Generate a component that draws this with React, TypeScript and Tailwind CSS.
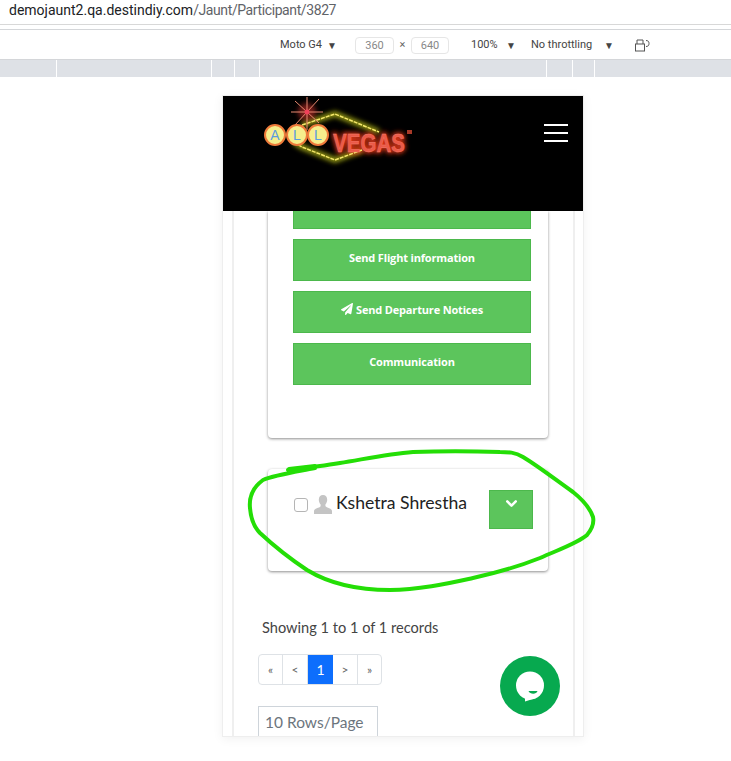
import { ChevronDown } from 'lucide-react';
import { FaPaperPlane } from 'react-icons/fa';

const rulerStops = [57, 155, 23, 25, 287, 26, 22];

const actions = [
  { label: 'Send Flight information', icon: false },
  { label: 'Send Departure Notices', icon: true },
  { label: 'Communication', icon: false },
];

const Logo = () => (
  <svg width="180" height="74" viewBox="0 0 180 74" className="block">
    <defs>
      <filter id="glow" x="-30%" y="-30%" width="160%" height="160%">
        <feGaussianBlur stdDeviation="2.5" />
      </filter>
    </defs>
    {/* glow layer */}
    <path d="M52 29 L85 18 L129 36 M44 46 L52 51 L85 64 L112 54" fill="none" stroke="#a8ac18" strokeWidth="5" filter="url(#glow)" />
    <text x="83" y="56" fontSize="25" fontWeight="700" fontFamily="Liberation Sans, sans-serif" fill="#d83418" stroke="#d83418" strokeWidth="3" textLength="72" lengthAdjust="spacingAndGlyphs" filter="url(#glow)">
      VEGAS
    </text>
    <circle cx="57" cy="16" r="9" fill="#c9302c" opacity="0.6" filter="url(#glow)" />
    {/* diamond */}
    <path d="M52 29 L85 18 L129 36 M44 46 L52 51 L85 64 L112 54" fill="none" stroke="#f4e66a" strokeWidth="1.5" strokeDasharray="4 1" />
    {/* star */}
    <g stroke="#e98a72" strokeWidth="1">
      <path d="M57 1 V34" />
      <path d="M41 16 H73" />
      <path d="M45 5 L69 27" />
      <path d="M69 3 L45 29" />
    </g>
    <circle cx="57" cy="16" r="2.5" fill="#f0405a" />
    {/* bulbs */}
    {[
      [25, 'A'],
      [47, 'L'],
      [68, 'L'],
    ].map(([cx, letter]) => (
      <g key={cx as number}>
        <circle cx={cx as number} cy="39" r="10" fill="#f6ee8c" stroke="#ee7a3a" strokeWidth="2" />
        <text x={cx as number} y="44" textAnchor="middle" fontSize="14" fontFamily="Liberation Sans, sans-serif" fill="#5a9be0">
          {letter}
        </text>
      </g>
    ))}
    <text x="83" y="56" fontSize="25" fontWeight="700" fontFamily="Liberation Sans, sans-serif" fill="#ec5a48" stroke="#f08070" strokeWidth="0.4" textLength="72" lengthAdjust="spacingAndGlyphs">
      VEGAS
    </text>
    <rect x="157" y="34" width="5" height="4" fill="#a83a28" />
  </svg>
);

const App = () => {
  return (
    <div className="relative w-[731px] h-[761px] overflow-hidden bg-white font-['Lato',sans-serif]">
      {/* browser url bar */}
      <div className="h-[25px] pl-[9px] pt-px border-b border-[#d8d8d8] text-[14px] leading-[18px] font-['Roboto',sans-serif] text-[#5f6368]">
        <span className="text-[#202124]">demojaunt2.qa.destindiy.com</span>
        <span className="tracking-[-0.4px]">/Jaunt/Participant/3827</span>
      </div>

      {/* devtools device toolbar */}
      <div className="mt-[4px] h-[31px] pt-[1px] border-y border-[#d4d6d9] flex items-center text-[11px] text-[#444] font-['Roboto',sans-serif]">
        <span className="ml-[280px] w-[47px]">Moto G4</span>
        <span className="text-[10px] w-[28px]">▼</span>
        <span className="w-[39px] h-[17px] border border-[#e6e6e6] rounded-sm text-center leading-[15px] text-[#888]">360</span>
        <span className="w-[17px] text-center text-[#666]">×</span>
        <span className="w-[38px] h-[17px] border border-[#e6e6e6] rounded-sm text-center leading-[15px] text-[#888]">640</span>
        <span className="ml-[22px] w-[35px]">100%</span>
        <span className="text-[10px] w-[25px]">▼</span>
        <span className="w-[73px]">No throttling</span>
        <span className="text-[10px] w-[30px]">▼</span>
        <svg width="16" height="14" viewBox="0 0 16 14" fill="none" stroke="#555" strokeWidth="1">
          <rect x="1.5" y="6" width="9" height="7" />
          <path d="M3 6V2h6v4M12 2.5c2 0 3 1 3 3s-1 3-3 3" />
        </svg>
      </div>

      {/* ruler */}
      <div className="h-[17px] bg-[#dee1e6] flex">
        {rulerStops.map((w, i) => (
          <div key={i} className="border-r border-white" style={{ width: w }} />
        ))}
      </div>

      {/* phone viewport */}
      <div className="mt-[18px] ml-[222px] w-[362px] h-[642px] border border-[#eeeeee] shadow-[0_2px_10px_rgba(0,0,0,0.06)] overflow-hidden">
        <div className="h-[115px] bg-black flex items-start justify-between">
          <div className="ml-[27px]">
            <Logo />
          </div>
          <div className="mt-[28px] mr-[15px] w-[24px] flex flex-col gap-[6px]">
            <div className="h-[2px] bg-white" />
            <div className="h-[2px] bg-white" />
            <div className="h-[2px] bg-white" />
          </div>
        </div>

        <div className="ml-[9px] mr-[8px] h-[527px] border-x-2 border-[#efefef] pl-[34px] pr-[25px]">
          {/* actions card */}
          <div className="h-[227px] bg-white rounded-b shadow-[0_1px_3px_rgba(0,0,0,0.45)] px-[25px] pr-[17px]">
            <div className="h-[18px] bg-[#5cc55c] border-x border-b border-[#4cb84c]" />
            {actions.map((a) => (
              <div
                key={a.label}
                className="mt-[10px] h-[42px] bg-[#5cc55c] border border-[#4cb84c] flex items-start justify-center pt-[10px] gap-[3px] text-white text-[11px] leading-[15px] tracking-[-0.17px] font-bold font-['Open_Sans',sans-serif]"
              >
                {a.icon && <FaPaperPlane className="w-[12px] h-[12px] mt-[1px]" />}
                {a.label}
              </div>
            ))}
          </div>

          {/* participant card */}
          <div className="mt-[31px] h-[102px] bg-white rounded shadow-[0_1px_3px_rgba(0,0,0,0.45)] flex items-start pl-[26px] pr-[15px] pt-[21px]">
            <div className="mt-[8px] w-[14px] h-[14px] shrink-0 border border-[#b5b5b5] rounded-[3px]" />
            <svg className="ml-[6px] mt-[5px] shrink-0" width="18" height="19" viewBox="0 0 18 19" fill="#c4c4c4">
              <path d="M9 0c2.6 0 4.2 2 4.2 4.8 0 1.8-.7 3.6-1.8 4.6v1.4c0 .9 1 1.3 2.6 1.9 2 .7 4 1.5 4 3.3V19H0v-2.9c0-1.8 2-2.6 4-3.3 1.6-.6 2.6-1 2.6-1.9V9.400C5.500 8.400 4.800 6.600 4.800 4.800 4.800 2 6.400 0 9 0z" />
            </svg>
            <div className="ml-[4px] flex-1 text-[17.6px] leading-[26px] text-[#222]">Kshetra Shrestha</div>
            <div className="w-[44px] h-[39px] bg-[#5cc55c] border border-[#4cb84c] flex justify-center pt-[4px]">
              <ChevronDown className="w-[17px] h-[17px] text-white" strokeWidth={3.5} />
            </div>
          </div>

          {/* list footer */}
          <div className="-ml-[10px] mt-[48px] pl-[4px] text-[14.6px] leading-[18px] text-[#444]">Showing 1 to 1 of 1 records</div>
          <div className="-ml-[10px] mt-[17px] flex w-[124px] h-[31px] border border-[#dee2e6] rounded text-[12px] text-[#666] overflow-hidden">
            <span className="w-[24px] border-r border-[#dee2e6] flex items-center justify-center">«</span>
            <span className="w-[25px] border-r border-[#dee2e6] flex items-center justify-center">&lt;</span>
            <span className="w-[25px] -my-px bg-[#0d6efd] text-white text-[14px] flex items-center justify-center">1</span>
            <span className="w-[25px] border-r border-[#dee2e6] flex items-center justify-center">&gt;</span>
            <span className="flex-1 flex items-center justify-center">»</span>
          </div>
          <div className="-ml-[10px] mt-[21px] w-[120px] h-[31px] border border-[#ced4da] pl-[6px] text-[15.500px] leading-[30px] text-[#6c757d]">10 Rows/Page</div>
        </div>
      </div>

      {/* chat bubble button */}
      <div className="absolute left-[500px] top-[656px] w-[60px] h-[60px] rounded-full bg-[#07a94f]">
        <svg width="60" height="60" viewBox="0 0 60 60">
          <circle cx="30" cy="29.500" r="14" fill="#fff" />
          <path d="M25 38 L25 45.500 L36 42z" fill="#fff" />
          <path d="M28.500 35h9c-1 3.500-7.500 3.500-9 0z" fill="#07a94f" />
        </svg>
      </div>

      {/* hand drawn annotation */}
      <svg className="absolute inset-0 pointer-events-none" width="731" height="761" fill="none">
        <path
          d="M315 468 C295 472 275 475 263 480 C252 488 249 498 250 508 C251 520 255 528 260 533 C275 547 292 560 307 570 C330 584 360 590 390 590 C420 590 450 583 473 578 C500 572 520 566 540 558 C560 549 578 543 587 535 C593 528 594 522 593 517 C590 508 583 500 573 492 C556 480 538 466 523 457 C515 452 508 452 500 452 C470 451 440 451 413 452 C388 454 365 459 340 463 C322 466 305 468 288 470"
          stroke="#24de06"
          strokeWidth="4"
          strokeLinecap="round"
        />
        <path d="M289 469 L315 466" stroke="#24de06" strokeWidth="4" strokeLinecap="round" />
      </svg>
    </div>
  );
};

export default App;
